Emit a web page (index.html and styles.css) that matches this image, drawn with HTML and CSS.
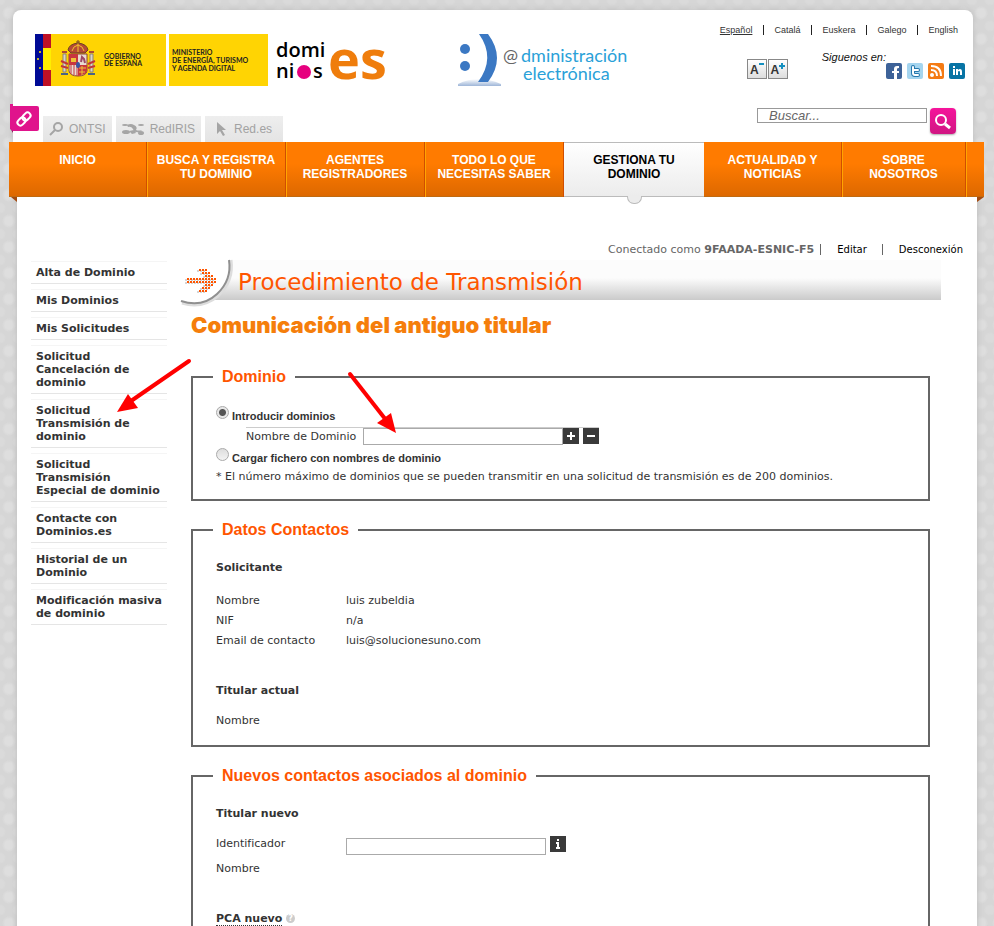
FILE: index.html
```html
<!DOCTYPE html>
<html lang="es">
<head>
    <meta charset="UTF-8">
    <meta name="viewport" content="width=device-width, initial-scale=1.0">
    <title>Procedimiento de Transmisión - Dominios.es</title>
    <link rel="stylesheet" href="styles.css">
</head>
<body>
<div class="page">

    <header class="header">
        <a class="share-link" href="#" aria-label="Enlaces">
            <svg width="29" height="30" viewBox="0 0 29 30">
                <path d="M0 24L3 29V24z" fill="#8d1459"/>
                <path d="M0 0H3V2H27Q29 2 29 4V25Q29 27 27 27H3L0 25z" fill="#e0148c"/>
                <g fill="none" stroke="#fff" stroke-width="2" transform="rotate(-45 14 15)">
                    <rect x="6" y="12" width="9" height="6" rx="3"/>
                    <rect x="13" y="12" width="9" height="6" rx="3"/>
                </g>
            </svg>
        </a>

        <div class="header-left">
            <div class="logos">
                <svg width="131" height="52" viewBox="0 0 131 52">
                    <rect width="131" height="52" fill="#ffd403"/>
                    <rect width="8" height="52" fill="#000a95"/>
                    <rect x="8" width="8" height="14" fill="#bd1026"/>
                    <rect x="8" y="14" width="8" height="22" fill="#ffee00"/>
                    <rect x="8" y="36" width="8" height="16" fill="#bd1026"/>
                    <g fill="#ffe600"><circle cx="5" cy="18" r="1"/><circle cx="3" cy="25" r="1"/><circle cx="5" cy="34" r="1"/></g>
                    <!-- escudo -->
                    <path d="M33 16Q34 10 43 9Q52 10 53 16L50 19H36z" fill="#b64a35" stroke="#6f4420"/>
                    <path d="M37 17Q38 12 43 11Q48 12 49 17M43 9V18" fill="none" stroke="#f2c32c"/>
                    <path d="M43 6V10M41 8H45" stroke="#7b4a22"/>
                    <path d="M34 20H52V37Q51 42 43 42Q35 42 34 37z" fill="#e9dcd2" stroke="#8b4634"/>
                    <path d="M34 20H43V31H34zM43 31H52V37Q51 41 43 42z" fill="#c8363f"/>
                    <path d="M36 28V24H41V28z" fill="#edc23a"/>
                    <path d="M46 28L47 23L49 25L50 29" fill="none" stroke="#9d4867" stroke-width="2"/>
                    <path d="M36 31V40M39 31V41M42 31V42" stroke="#c8363f" stroke-width="1"/>
                    <path d="M44 34H51M44 38H50M47 32V41" stroke="#edc23a"/>
                    <ellipse cx="43" cy="31" rx="2" ry="3" fill="#3b55a2"/>
                    <path d="M28 20H31V38H28zM55 20H58V38H55z" fill="#d8d5cc" stroke="#8d8372"/>
                    <path d="M26 27L33 30M26 32L33 34M53 30L60 27M53 34L60 32" stroke="#c2353a" stroke-width="2"/>
                    <path d="M27 18H32M54 18H59" stroke="#ad4a36" stroke-width="2"/>
                    <path d="M26 40H33M53 40H60" stroke="#4b6485" stroke-width="2"/>
                    <g class="gov-text"><text x="69" y="25">GOBIERNO</text><text x="69" y="32">DE ESPAÑA</text></g>
                </svg>
                <svg width="99" height="52" viewBox="0 0 99 52">
                    <rect width="99" height="52" fill="#ffd403"/>
                    <g class="gov-text">
                        <text x="3" y="21">MINISTERIO</text>
                        <text x="3" y="29">DE ENERGÍA, TURISMO</text>
                        <text x="3" y="37">Y AGENDA DIGITAL</text>
                    </g>
                </svg>
                <svg class="logo-dominios" width="112" height="52" viewBox="0 0 112 52">
                    <g class="dominios-text"><text x="0" y="23">domi</text><text x="0" y="44">ni</text><text x="37" y="44">s</text></g>
                    <circle cx="28" cy="38" r="7" fill="#e6007e"/>
                    <text class="es-text" x="52" y="45">es</text>
                </svg>
                <svg class="logo-admin" width="168" height="52" viewBox="0 0 168 52">
                    <defs>
                        <linearGradient id="floor" x1="0" y1="0" x2="0" y2="1">
                            <stop offset="0" stop-color="#fff"/><stop offset="1" stop-color="#9eb6d8"/>
                        </linearGradient>
                    </defs>
                    <path d="M0 50Q20 40 43 50V52H0z" fill="url(#floor)"/>
                    <circle cx="7" cy="15" r="5" fill="#3b78c3"/><circle cx="7" cy="32" r="5" fill="#3b78c3"/>
                    <path d="M21 0H30Q48 24 30 48H20Q38 24 21 0z" fill="#3b78c3"/>
                    <text class="admin-at" x="45" y="28">@</text>
                    <text class="admin-text" x="63" y="28">dministración</text>
                    <text class="admin-text" x="65" y="46">electrónica</text>
                </svg>
            </div>
            <ul class="sites">
                <li><a href="#">
                    <svg width="14" height="14" viewBox="0 0 14 14" fill="none" stroke="#a5a5a5"><circle cx="9" cy="5" r="4" stroke-width="2"/><path d="M6 8L1 13" stroke-width="2"/></svg>
                    ONTSI</a></li>
                <li><a href="#">
                    <svg width="22" height="14" viewBox="0 0 22 14" fill="#a5a5a5"><ellipse cx="3" cy="3" rx="3" ry="1"/><ellipse cx="4" cy="10" rx="4" ry="2"/><ellipse cx="19" cy="3" rx="3" ry="1"/><ellipse cx="19" cy="11" rx="3" ry="2"/><path d="M5 3Q9 1 12 3Q16 5 14 8Q17 9 20 8L18 10Q12 11 11 7Q9 4 6 5zM7 9L12 8L14 11L10 12z"/></svg>
                    RedIRIS</a></li>
                <li><a href="#">
                    <svg width="12" height="14" viewBox="0 0 12 14" fill="#a5a5a5"><path d="M1 0L10 8L6 8L9 13L7 14L4 9L1 12z"/></svg>
                    Red.es</a></li>
            </ul>
        </div>

        <div class="header-right">
            <ul class="languages">
                <li><a class="current" href="#">Español</a></li>
                <li><a href="#">Catalá</a></li>
                <li><a href="#">Euskera</a></li>
                <li><a href="#">Galego</a></li>
                <li><a href="#">English</a></li>
            </ul>
            <div class="tools">
                <div class="font-size">
                    <button type="button" aria-label="Reducir texto">A<svg width="5" height="6"><path d="M0 1H5" stroke="#1590c0" stroke-width="2"/></svg></button>
                    <button type="button" aria-label="Aumentar texto">A<svg width="6" height="6"><path d="M0 3H6M3 0V6" stroke="#1590c0" stroke-width="2"/></svg></button>
                </div>
                <span class="follow">Siguenos en:</span>
                <div class="social">
                    <a href="#" aria-label="Facebook"><svg width="16" height="16"><rect width="16" height="16" rx="2" fill="#3d6298"/><path d="M13 3H11Q8 3 8 6V8H6V10H8V16H11V10H13V8H11V6Q11 5 13 5z" fill="#fff"/></svg></a>
                    <a href="#" aria-label="Twitter"><svg width="16" height="16"><rect width="16" height="16" rx="2" fill="#a5d5ef"/><path d="M6 4V10Q6 12 8 12H11M6 7H11" fill="none" stroke="#2678ad" stroke-width="4" stroke-linecap="round"/><path d="M6 4V10Q6 12 8 12H11M6 7H11" fill="none" stroke="#fff" stroke-width="2" stroke-linecap="round"/></svg></a>
                    <a href="#" aria-label="RSS"><svg width="16" height="16"><rect width="16" height="16" rx="2" fill="#f47b14"/><circle cx="4" cy="12" r="2" fill="#fff"/><path d="M3 7Q9 7 9 13M3 3Q13 3 13 13" fill="none" stroke="#fff" stroke-width="2"/></svg></a>
                    <a href="#" aria-label="LinkedIn"><svg width="16" height="16"><rect width="16" height="16" rx="2" fill="#0874a5"/><path d="M4 6H6V12H4zM4 3H6V5H4zM7 6H9V7Q10 6 11 6Q13 6 13 9V12H11V9Q11 8 10 8Q9 8 9 9V12H7z" fill="#fff"/></svg></a>
                </div>
            </div>
            <form class="search">
                <input type="text" placeholder="Buscar..." aria-label="Buscar">
                <button type="button" aria-label="Buscar"><svg width="26" height="26" fill="none" stroke="#fff"><circle cx="11" cy="12" r="5" stroke-width="2"/><path d="M15 16L20 20" stroke-width="3"/></svg></button>
            </form>
        </div>
    </header>

    <nav class="nav">
        <a href="#">INICIO</a>
        <a href="#">BUSCA Y REGISTRA<br>TU DOMINIO</a>
        <a href="#">AGENTES<br>REGISTRADORES</a>
        <a href="#">TODO LO QUE<br>NECESITAS SABER</a>
        <a class="active" href="#">GESTIONA TU<br>DOMINIO</a>
        <a href="#">ACTUALIDAD Y<br>NOTICIAS</a>
        <a href="#">SOBRE<br>NOSOTROS</a>
    </nav>

    <div class="content">
        <div class="user-bar">
            <span class="user">Conectado como <strong>9FAADA-ESNIC-F5</strong></span>
            <a href="#">Editar</a>
            <a href="#">Desconexión</a>
        </div>

        <div class="columns">
            <ul class="sidebar">
                <li><a href="#">Alta de Dominio</a></li>
                <li><a href="#">Mis Dominios</a></li>
                <li><a href="#">Mis Solicitudes</a></li>
                <li><a href="#">Solicitud<br>Cancelación de dominio</a></li>
                <li><a href="#">Solicitud<br>Transmisión de dominio</a></li>
                <li><a href="#">Solicitud Transmisión<br>Especial de dominio</a></li>
                <li><a href="#">Contacte con Dominios.es</a></li>
                <li><a href="#">Historial de un Dominio</a></li>
                <li><a href="#">Modificación masiva de dominio</a></li>
            </ul>

            <main class="main">
                <div class="banner">
                    <svg class="curl" width="56" height="50" viewBox="0 0 56 50">
                        <path d="M0 0H49Q52 20 37 34Q22 48 0 41z" fill="#fff"/>
                        <path d="M51 0Q54 21 38 36Q22 49 2 43" fill="none" stroke="#ddd" stroke-width="3"/>
                        <path d="M49 0Q52 20 37 34Q22 48 1 41" fill="none" stroke="#909090" stroke-width="2"/>
                        <!-- flecha de puntos -->
                        <g stroke-width="2" stroke-dasharray="2 1" fill="none">
                            <path stroke="#d5d5d5" d="M17 11H25M20 14H28M23 17H31M5 20H34M5 23H34M23 26H31M20 29H28M17 32H25"/>
                            <path stroke="#ff5500" d="M19 10H27M22 13H30M25 16H33M7 19H36M7 22H36M25 25H33M22 28H30M19 31H27"/>
                        </g>
                    </svg>
                    <h1>Procedimiento de Transmisión</h1>
                </div>
                <form class="procedure">
                    <h2>Comunicación del antiguo titular</h2>

                    <fieldset>
                        <legend>Dominio</legend>
                        <div class="option">
                            <input type="radio" id="manual" name="modo" checked>
                            <label for="manual">Introducir dominios</label>
                        </div>
                        <div class="domain-row">
                            <label for="dominio">Nombre de Dominio</label>
                            <input class="field" type="text" id="dominio">
                            <button class="icon-btn" type="button" aria-label="Añadir"><svg width="16" height="16"><path d="M4 8H12M8 4V12" stroke="#fff" stroke-width="2"/></svg></button>
                            <button class="icon-btn remove" type="button" aria-label="Quitar"><svg width="16" height="16"><path d="M4 8H12" stroke="#fff" stroke-width="2"/></svg></button>
                        </div>
                        <div class="option">
                            <input type="radio" id="fichero" name="modo">
                            <label for="fichero">Cargar fichero con nombres de dominio</label>
                        </div>
                        <p class="note">* El número máximo de dominios que se pueden transmitir en una solicitud de transmisión es de 200 dominios.</p>
                    </fieldset>

                    <fieldset>
                        <legend>Datos Contactos</legend>
                        <section class="requester">
                            <h3>Solicitante</h3>
                            <dl>
                                <dt>Nombre</dt><dd>luis zubeldia</dd>
                                <dt>NIF</dt><dd>n/a</dd>
                                <dt>Email de contacto</dt><dd>luis@solucionesuno.com</dd>
                            </dl>
                        </section>
                        <section>
                            <h3>Titular actual</h3>
                            <dl><dt>Nombre</dt><dd></dd></dl>
                        </section>
                    </fieldset>

                    <fieldset>
                        <legend>Nuevos contactos asociados al dominio</legend>
                        <section>
                            <h3>Titular nuevo</h3>
                            <div class="id-row">
                                <label for="identificador">Identificador</label>
                                <input class="field" type="text" id="identificador">
                                <button class="icon-btn info" type="button" aria-label="Información"><svg width="16" height="16" fill="#fff"><path d="M7 3H9V5H7zM6 6H9V11H10V13H6V11H7V8H6z"/></svg></button>
                            </div>
                            <dl><dt>Nombre</dt><dd></dd></dl>
                        </section>
                        <section>
                            <h3><abbr>PCA nuevo</abbr> <span class="help">?</span></h3>
                        </section>
                    </fieldset>
                </form>
            </main>
        </div>
    </div>

    <svg class="arrow arrow-menu" width="80" height="60" viewBox="0 0 80 60">
        <path d="M76 5L18 45" stroke="red" stroke-width="4" stroke-linecap="round"/>
        <path d="M4 56L15 38L25 52z" fill="red"/>
    </svg>
    <svg class="arrow arrow-field" width="60" height="70" viewBox="0 0 60 70">
        <path d="M5 6L41 52" stroke="red" stroke-width="4" stroke-linecap="round"/>
        <path d="M51 65L32 55L46 45z" fill="red"/>
    </svg>
</div>
</body>
</html>
```

FILE: styles.css
```css
* {
    box-sizing: border-box;
}

body {
    margin: 0;
    height: 100vh;
    overflow: hidden;
    font-family: "DejaVu Sans", Verdana, sans-serif;
    font-size: 11px;
    color: #333;
    background-color: #d6d6d6;
    background-image:
        radial-gradient(circle, #dedede 4px, transparent 7px),
        radial-gradient(circle, #dadada 4px, transparent 6px);
    background-size: 18px 26px;
    background-position: 0 0, 9px 13px;
}

a {
    color: inherit;
    text-decoration: none;
}

ul {
    margin: 0;
    padding: 0;
    list-style: none;
}

svg {
    display: block;
    overflow: visible;
}

button {
    padding: 0;
    cursor: pointer;
}

.page {
    position: relative;
    display: flex;
    flex-direction: column;
    min-height: 100vh;
    padding: 10px 10px 0 9px;
}

/* header */
.header {
    position: relative;
    display: flex;
    justify-content: space-between;
    margin: 0 11px 0 4px;
    height: 132px;
    background: #fff;
    border-radius: 8px 8px 0 0;
    box-shadow: 0 0 6px #bbb;
    font-family: "Liberation Sans", Arial, sans-serif;
}

.share-link {
    position: absolute;
    left: -3px;
    top: 94px;
}

.header-left {
    display: flex;
    flex-direction: column;
    justify-content: space-between;
    padding: 24px 0 0 22px;
}

.logos {
    display: flex;
    gap: 3px;
}

.logo-dominios {
    margin-left: 5px;
}

.logo-admin {
    margin-left: 67px;
}

.gov-text {
    font-family: Lato, sans-serif;
    font-size: 7px;
    font-weight: 700;
    fill: #222;
}

.dominios-text {
    font-family: "Open Sans", sans-serif;
    font-size: 20px;
    font-weight: 600;
    fill: #000;
}

.es-text {
    font-family: "Open Sans", sans-serif;
    font-size: 54px;
    font-weight: 700;
    fill: #ef7d0c;
}

.admin-at,
.admin-text {
    font-family: Lato, sans-serif;
    font-size: 18px;
    fill: #2aa1d8;
}

.admin-at {
    fill: #666;
}

.sites {
    display: flex;
    gap: 4px;
    margin-left: 8px;
}

.sites a {
    display: flex;
    align-items: center;
    gap: 6px;
    height: 26px;
    padding: 0 6px;
    background: linear-gradient(#eee, #e4e4e4);
    color: #a2a2a2;
    font-size: 12px;
}

.sites li:last-child a {
    padding: 0 11px;
}

.header-right {
    display: flex;
    flex-direction: column;
    align-items: flex-end;
    padding: 14px 8px 0 0;
}

.languages {
    display: flex;
    align-items: center;
    height: 12px;
    margin-right: 7px;
    font-size: 9px;
}

.languages li + li {
    margin-left: 11px;
    padding-left: 10px;
    border-left: 1px solid #222;
}

.languages .current {
    text-decoration: underline;
}

.tools {
    display: flex;
    align-items: flex-end;
    height: 28px;
    margin: 15px 0 29px;
}

.font-size {
    display: flex;
    gap: 1px;
    margin-right: 34px;
}

.font-size button {
    display: flex;
    justify-content: center;
    align-items: flex-start;
    width: 20px;
    height: 20px;
    padding-top: 3px;
    border: 1px solid #888;
    background: linear-gradient(#fff, #ddd);
    color: #333;
    font: bold 12px "Liberation Sans", Arial, sans-serif;
}

.follow {
    align-self: flex-start;
    color: #111;
    font-size: 11px;
    font-style: italic;
}

.social {
    display: flex;
    gap: 5px;
}

.search {
    display: flex;
    align-items: flex-start;
    gap: 3px;
    margin-right: 9px;
}

.search input {
    width: 170px;
    height: 15px;
    padding: 0 11px;
    border: 1px solid #999;
    font: italic 13px "Liberation Sans", Arial, sans-serif;
}

.search input::placeholder {
    color: #666;
}

.search button {
    width: 26px;
    height: 26px;
    border: 0;
    border-radius: 4px;
    background: linear-gradient(#f5149b, #d01682);
    box-shadow: 0 1px 2px #aaa;
}

/* navigation */
.nav {
    position: relative;
    z-index: 1;
    display: grid;
    grid-template-columns: 138fr 139fr 139fr 139fr 140fr 138fr 124fr 18fr;
    height: 55px;
    background: linear-gradient(#ff7b00 40%, #dd6800);
    border-bottom: 1px solid #c06a10;
    font: bold 12px/14px "Liberation Sans", Arial, sans-serif;
    color: #fff;
    text-align: center;
}

.nav a {
    padding-top: 11px;
    border-right: 1px solid #d04e00;
    box-shadow: 1px 0 #ffa500;
}

.nav .active {
    position: relative;
    height: 55px;
    border: solid #bbb;
    border-width: 1px 0;
    padding-top: 10px;
    background: linear-gradient(#fff, #ececec);
    box-shadow: none;
    color: #000;
}

.nav .active::after {
    content: "";
    position: absolute;
    left: 63px;
    top: 53px;
    width: 13px;
    height: 7px;
    border: 1px solid #bbb;
    border-top: 0;
    border-radius: 0 0 7px 7px;
    background: #ececec;
}

.nav::before,
.nav::after {
    content: "";
    position: absolute;
    top: 55px;
    border-top: 5px solid #a34a10;
}

.nav::before {
    left: 2px;
    border-left: 6px solid transparent;
}

.nav::after {
    right: 0;
    border-right: 7px solid transparent;
}

/* content */
.content {
    flex: 1;
    margin: 0 7px 0 8px;
    padding-top: 42px;
    background: #fff;
    box-shadow: 0 0 6px #bbb;
}

.user-bar {
    display: flex;
    justify-content: flex-end;
    align-items: center;
    height: 21px;
    padding-right: 14px;
    color: #666;
}

.user-bar a {
    margin-left: 15px;
    padding-left: 16px;
    border-left: 1px solid #666;
    color: #000;
    font-size: 10px;
    line-height: 11px;
}

.user-bar .user + a {
    margin-left: 6px;
}

.columns {
    display: flex;
    gap: 13px;
    padding: 0 36px 0 14px;
}

.sidebar {
    flex: none;
    width: 136px;
    font-weight: bold;
    line-height: 13px;
}

.sidebar li {
    margin-top: 5px;
    padding: 4px 0 4px 5px;
    border-top: 1px solid #f5f5f5;
    border-bottom: 1px solid #e5e5e5;
}

.sidebar li:first-child {
    margin-top: 1px;
}

.main {
    flex: 1;
}

.banner {
    position: relative;
    height: 40px;
    padding-left: 58px;
    background: linear-gradient(#fcfcfc 45%, #cacaca);
}

.curl {
    position: absolute;
    left: 0;
    top: 0;
}

.banner h1 {
    margin: 0;
    color: #ff5500;
    font-size: 23px;
    font-weight: normal;
    line-height: 44px;
}

.procedure {
    padding: 0 11px;
}

h2 {
    margin: 10px 0 27px;
    color: #f57e0b;
    font: 900 22px/30px Inter, "Arial Black", sans-serif;
}

fieldset {
    margin: 0 0 19px;
    padding: 18px 23px 14px;
    border: 2px solid #666;
}

legend {
    margin-left: -3px;
    padding: 0 9px;
    color: #ff5500;
    font: bold 16px/20px "Liberation Sans", Arial, sans-serif;
}

.option {
    display: flex;
    align-items: center;
    gap: 3px;
    height: 22px;
    font: bold 11px "Liberation Sans", Arial, sans-serif;
}

.option input {
    appearance: none;
    width: 13px;
    height: 13px;
    margin: 0 0 8px;
    border: 1px solid #aaa;
    border-radius: 50%;
    background: linear-gradient(#ddd, #f3f3f3);
}

.option input:checked {
    background: radial-gradient(circle, #555 3px, #e8e8e8 4px);
}

.domain-row {
    display: flex;
    align-items: flex-start;
    width: 353px;
    height: 20px;
    margin-left: 30px;
    border-top: 1px solid #ccc;
    line-height: 18px;
}

.domain-row label {
    flex: 1;
}

.field {
    width: 200px;
    height: 17px;
    padding: 0 2px;
    border: 1px solid #aaa;
    font-size: 11px;
}

.icon-btn {
    width: 16px;
    height: 16px;
    border: 0;
    background: #3a3a3a;
}

.remove {
    margin-left: 4px;
}

.note {
    margin: 0;
    line-height: 16px;
}

h3 {
    margin: 0 0 10px;
    font-size: 11px;
    line-height: 20px;
}

.requester h3 {
    margin-bottom: 13px;
}

section + section {
    margin-top: 30px;
}

dl {
    display: grid;
    grid-template-columns: 130px 1fr;
    margin: 0;
    line-height: 20px;
}

dd {
    margin: 0;
}

.id-row {
    display: flex;
    align-items: center;
    height: 25px;
}

.id-row label {
    width: 130px;
    line-height: 20px;
    align-self: flex-start;
}

.info {
    margin: 0 0 6px 4px;
}

abbr {
    border-bottom: 1px dotted #333;
}

.help {
    display: inline-block;
    width: 9px;
    height: 9px;
    border-radius: 50%;
    background: #ccc;
    color: #fff;
    font-size: 8px;
    line-height: 9px;
    text-align: center;
    vertical-align: 1px;
}

/* red pointers drawn over the page */
.arrow {
    position: absolute;
    z-index: 2;
}

.arrow-menu {
    left: 113px;
    top: 356px;
}

.arrow-field {
    left: 345px;
    top: 368px;
}
```
